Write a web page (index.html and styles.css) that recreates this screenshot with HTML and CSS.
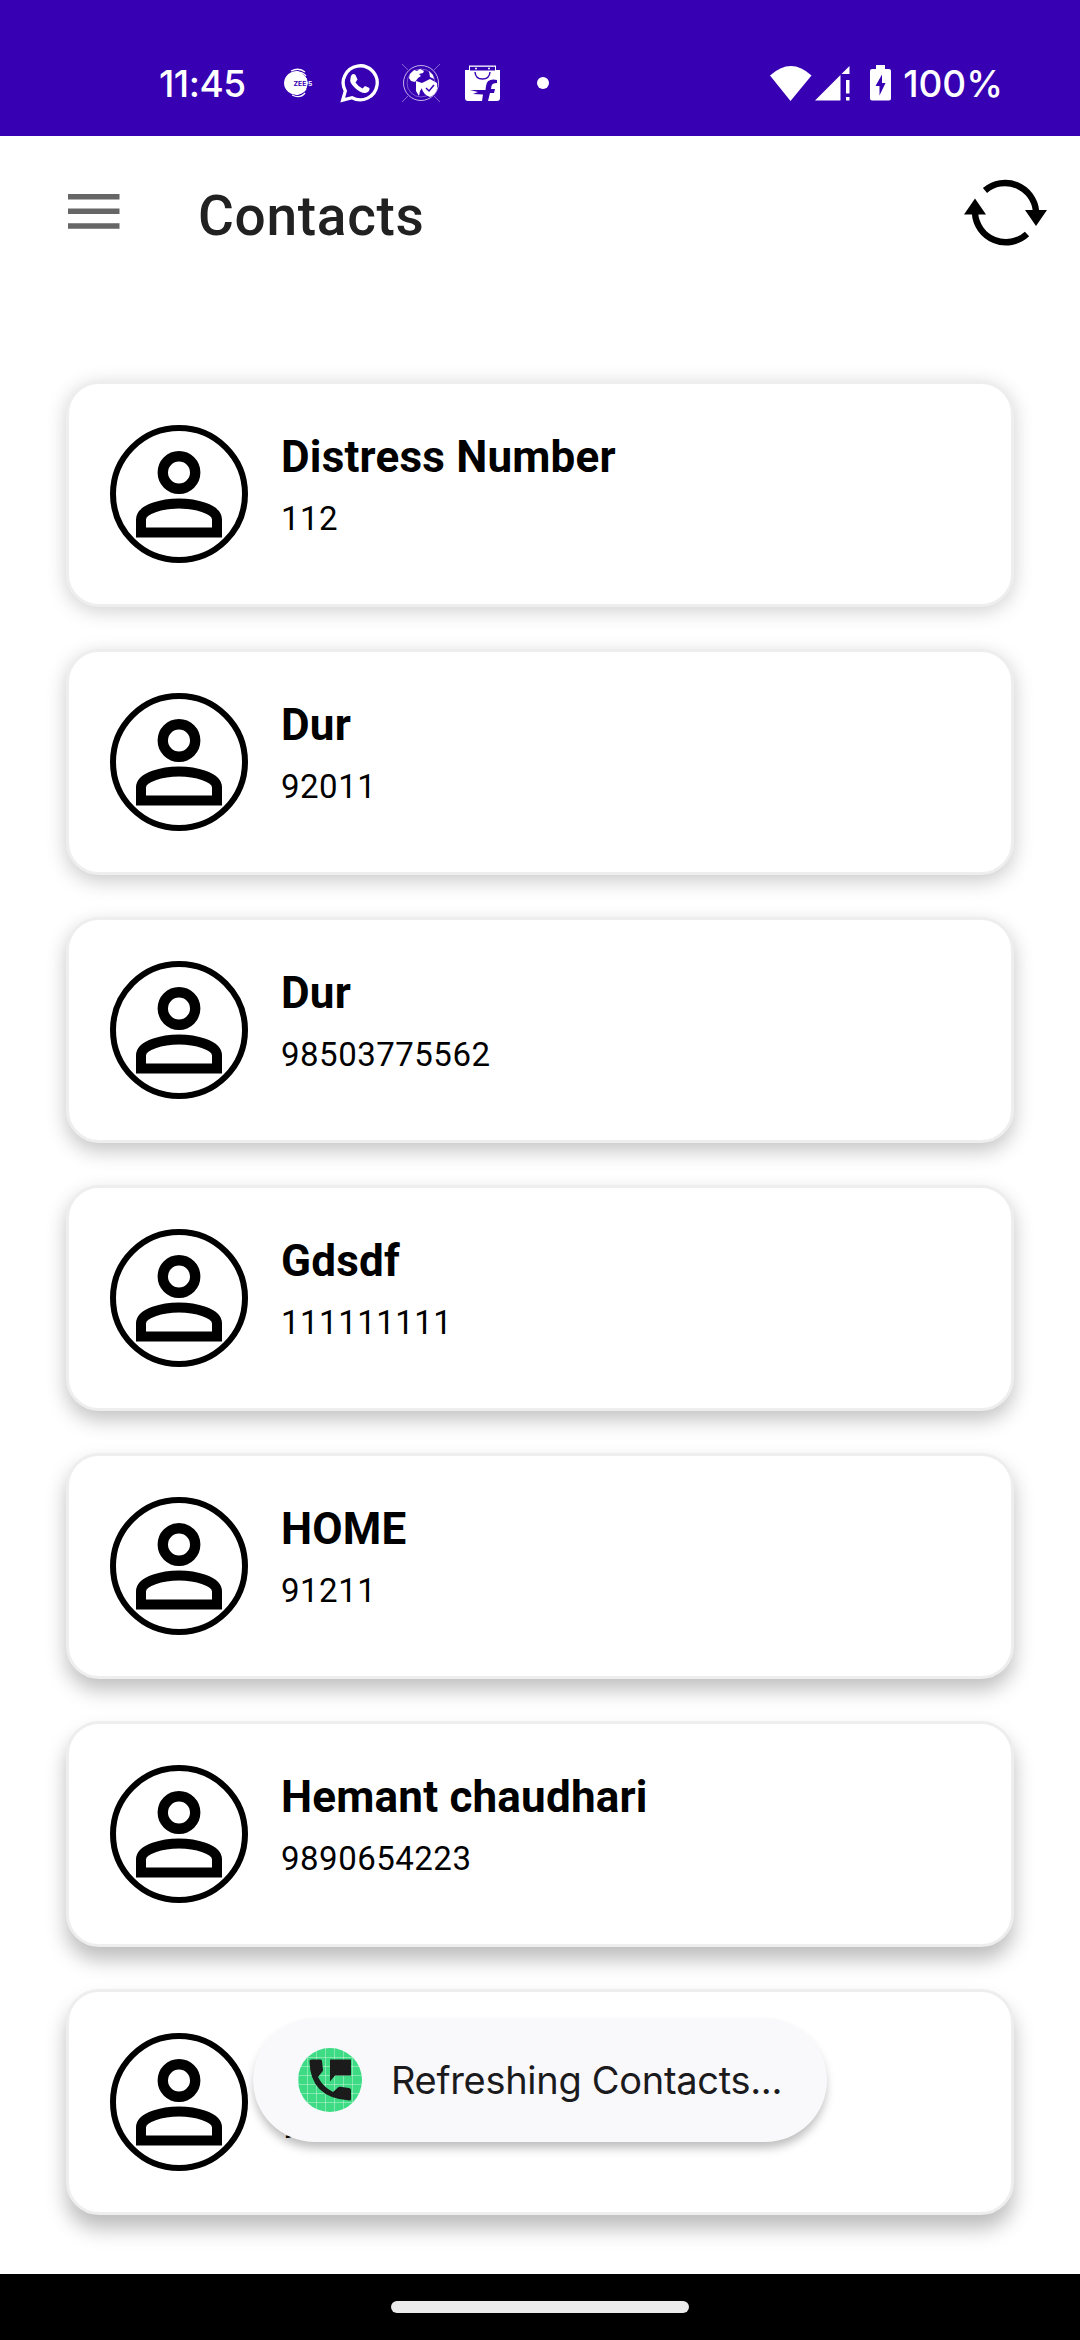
FILE: index.html
```html
<!DOCTYPE html>
<html lang="en">
<head>
<meta charset="utf-8">
<title>Contacts</title>
<link rel="stylesheet" href="styles.css">
</head>
<body>
<svg class="defs" aria-hidden="true">
  <symbol id="person" viewBox="0 0 86 87">
    <circle cx="43" cy="21.500" r="16.200" fill="none" stroke="#000" stroke-width="10.400"/>
    <path d="M5 81.500V68.500C5 58 27 52.500 43 52.500S81 58 81 68.500V81.500Z" fill="none" stroke="#000" stroke-width="10"/>
  </symbol>
</svg>
<div class="screen">
  <header class="status">
    <span class="clock">11:45</span>
    <div class="notes">
      <svg class="zee" width="30" height="30" viewBox="0 0 30 30"><path d="M14 3A12.500 12.500 0 0 0 0 15A12.500 12.500 0 0 0 14 27Q20 25 23 19.500H10V11.500H23Q20 5 14 3Z" fill="#fff"/><path d="M7 3Q15-1 21 4M12 5Q18 3 22 8M8 27Q16 31 21 25M13 25Q18 26 22 21" fill="none" stroke="#fff" stroke-width="1.300"/><path d="M9.500 10H22.500L24 15L22.500 20H9.500Z" fill="#fff"/><text x="9.500" y="17.600" font-size="6.800" font-weight="700" fill="#3700b3">ZEE</text><text x="24" y="17.600" font-size="6.800" font-weight="700" fill="#fff">5</text></svg>
      <svg class="wa" width="40" height="40" viewBox="0 0 40 40"><path d="M2.700 37.200L5.300 28A17 17 0 1 1 12 34.700Z" fill="none" stroke="#fff" stroke-width="3.300"/><path d="M12 11.500Q14 10.500 15.500 12L17.500 16.500L15.500 19.500Q18.500 24 22.500 25.500L25 23L29.500 25Q30 29 25.500 30Q21 30.500 15 25T10.500 15.500Q10.500 13 12 11.500Z" fill="#fff"/></svg>
      <svg class="globe" width="38" height="38" viewBox="0 0 38 38"><g fill="none" stroke="#fff"><circle cx="19" cy="19" r="17.500" stroke-width="1" opacity=".7"/><circle cx="19" cy="19" r="14" stroke-width=".7" opacity=".5"/><path d="M0 0L6 6M38 0L32 6M0 38L6 32M38 38L32 32" stroke-width="1" opacity=".4"/></g><path d="M8 10L12 6L15 7L18 5L22 7L21 9L17 10L19 12L16 14L13 18L9 17L7 14ZM27 7L31 11L32 15L28 13ZM14 17L20 19V24L18 27L17 32L14 27ZM28 15L35 19V25Q34 30 28 33Q21 30 20 25V19Z" fill="#fff"/><path d="M24 24L27 27L32 21" fill="none" stroke="#3700b3" stroke-width="1.500"/></svg>
      <svg class="flip" width="35" height="36" viewBox="0 0 35 36"><path d="M4 .5H31V5H35V33Q35 36 32 36H3Q0 36 0 33V5H4Z" fill="#fff"/><path d="M5 1.800H30V5.500H5Z" fill="#3700b3"/><circle cx="11" cy="3.500" r="1" fill="#fff"/><circle cx="24" cy="3.500" r="1" fill="#fff"/><path d="M10 7Q10.500 14 17.500 14T25 7" fill="none" stroke="#3700b3" stroke-width="1.400"/><path d="M32 15Q22 13 21 21L20.500 25H5L13 27L8 29L18 29.500L17 36H23L25 28H29L30 24H26L26.500 21Q27 18 32 18Z" fill="#3700b3"/></svg>
      <i class="dot"></i>
    </div>
    <div class="system">
      <svg class="wifi" width="42" height="35" viewBox="0 0 42 35"><path d="M0 9.500Q21-9.500 41.500 9.500L20.500 35Z" fill="#fff"/></svg>
      <svg class="signal" width="35" height="35" viewBox="0 0 35 35"><path d="M0 34.500L25.500 9V34.500ZM26.500 8L34.500 0V8ZM31 14H34.500V27.500H31ZM31 31H34.500V34.500H31Z" fill="#fff"/></svg>
      <svg class="battery" width="21" height="36" viewBox="0 0 21 36"><path d="M6 0H15V4H19Q21 4 21 6V33.500Q21 35.500 19 35.500H2Q0 35.500 0 33.500V6Q0 4 2 4H6Z" fill="#fff"/><path d="M12 9.500L5.500 21H9.500V30.500L15.500 18H12Z" fill="#3700b3"/></svg>
      <span class="percent">100%</span>
    </div>
  </header>
  <div class="appbar">
    <svg class="menu" width="52" height="36" viewBox="0 0 52 36"><path d="M0 0H51.500V5.500H0ZM0 14.500H51.500V20H0ZM0 29.200H51.500V34.700H0Z" fill="#666"/></svg>
    <h1>Contacts</h1>
    <svg class="sync" width="84" height="68" viewBox="0 0 84 68"><g fill="none" stroke="#000" stroke-width="6.400"><path d="M21 12.500A31 31 0 0 1 72 33"/><path d="M63 56A31 31 0 0 1 11 35"/></g><path d="M61 32H83L72 48ZM0 36.500H22L11 20.500Z"/></svg>
  </div>
  <main class="list">
    <article class="card"><div class="avatar"><svg><use href="#person"/></svg></div><div class="info"><h2>Distress Number</h2><p>112</p></div></article>
    <article class="card"><div class="avatar"><svg><use href="#person"/></svg></div><div class="info"><h2>Dur</h2><p>92011</p></div></article>
    <article class="card"><div class="avatar"><svg><use href="#person"/></svg></div><div class="info"><h2>Dur</h2><p>98503775562</p></div></article>
    <article class="card"><div class="avatar"><svg><use href="#person"/></svg></div><div class="info"><h2>Gdsdf</h2><p>111111111</p></div></article>
    <article class="card"><div class="avatar"><svg><use href="#person"/></svg></div><div class="info"><h2>HOME</h2><p>91211</p></div></article>
    <article class="card"><div class="avatar"><svg><use href="#person"/></svg></div><div class="info"><h2>Hemant chaudhari</h2><p>9890654223</p></div></article>
    <article class="card"><div class="avatar"><svg><use href="#person"/></svg></div><div class="info"><h2></h2><p>9</p></div></article>
  </main>
  <div class="toast">
    <svg class="app" width="64" height="64" viewBox="0 0 64 64"><defs><clipPath id="round"><circle cx="32" cy="32" r="32"/></clipPath></defs><g clip-path="url(#round)"><path d="M0 0H64V64H0Z" fill="#3ddc84"/><path d="M.5 0V64M9.500 0V64M18.500 0V64M27.500 0V64M36.500 0V64M45.500 0V64M54.500 0V64M0 9.500H64M0 18.500H64M0 27.500H64M0 36.500H64M0 45.500H64M0 54.500H64" stroke="#fff" stroke-opacity=".4" stroke-width=".9"/></g><path d="M32 11.500H53V27.500H37L32 33.500ZM13.500 11.500H22.500Q24 11.500 24 13L25 22Q25 23 24 24L20 29Q25 39 35 44L40 39.500Q41 38.500 42 38.700L51 40Q53 40.300 53 42V51Q53 52.500 51.500 52.500Q12 50 11.500 13Q11.500 11.500 13.500 11.500Z" fill="#1b1b1b"/></svg>
    <span>Refreshing Contacts...</span>
  </div>
  <footer class="nav"><i></i></footer>
</div>
</body>
</html>
```

FILE: styles.css
```css
* { box-sizing: border-box; }
body { margin: 0; font-family: Roboto, sans-serif; }
h1, h2, p { margin: 0; }
svg { display: block; flex: none; }
.defs { position: absolute; width: 0; height: 0; }
.screen { position: relative; display: flex; flex-direction: column; width: 1080px; height: 2340px; background: #fff; overflow: hidden; }
.status { flex: none; display: flex; align-items: center; height: 136px; padding: 30px 77px 0 159px; background: #3700b3; color: #fff; font-family: Inter, sans-serif; font-size: 37px; font-weight: 500; }
.clock { width: 125px; letter-spacing: -.5px; }
.notes { display: flex; align-items: center; }
.zee { margin-right: 26px; }
.wa { margin-right: 22px; }
.globe { margin-right: 25px; }
.flip { margin-right: 37px; }
.dot { width: 12px; height: 12px; border-radius: 50%; background: #fff; }
.system { display: flex; align-items: center; margin-left: auto; }
.wifi { margin-right: 3px; }
.signal { margin-right: 20px; }
.battery { margin-right: 12px; }
.percent { white-space: nowrap; }
.appbar { flex: none; display: flex; align-items: center; height: 154px; padding: 0 32px 2px 68px; }
.menu { margin-right: 78px; }
h1 { margin-top: 8px; font-size: 55px; font-weight: 500; line-height: 64px; letter-spacing: .7px; color: #212121; }
.sync { margin-left: auto; }
.list { flex: 1; display: flex; flex-direction: column; gap: 42px; padding: 91px 66px 0; }
.card { flex: none; display: flex; height: 226px; padding: 41px; background: #fff; border: 3px solid #eee; border-radius: 33px; }
.card:nth-child(1) { box-shadow: 0 4px 20px rgba(0,0,0,.19); }
.card:nth-child(2) { box-shadow: 0 6px 20px rgba(0,0,0,.21); }
.card:nth-child(3) { box-shadow: 0 8px 20px rgba(0,0,0,.23); }
.card:nth-child(4) { box-shadow: 0 9px 20px rgba(0,0,0,.24); }
.card:nth-child(5) { box-shadow: 0 11px 20px rgba(0,0,0,.25); }
.card:nth-child(6) { box-shadow: 0 13px 20px rgba(0,0,0,.26); }
.card:nth-child(7) { box-shadow: 0 14px 20px rgba(0,0,0,.26); }
.avatar { flex: none; width: 138px; height: 138px; padding: 20px 0 0 20px; border: 6px solid #000; border-radius: 50%; }
.avatar svg { width: 86px; height: 87px; }
.info { margin-left: 33px; padding-top: 6px; color: #000; }
h2 { height: 52px; font-size: 44px; font-weight: 700; line-height: 52px; letter-spacing: .2px; white-space: nowrap; }
p { margin-top: 16px; font-size: 33px; line-height: 40px; letter-spacing: .5px; }
.toast { position: absolute; left: 253px; top: 2018px; display: flex; align-items: center; width: 574px; height: 124px; padding: 0 0 1px 45px; border-radius: 62px; background: #f9f9fb; box-shadow: 0 7px 10px -1px rgba(0,0,0,.26); color: #1b1b1d; font-family: Inter, sans-serif; font-size: 38px; letter-spacing: -.3px; }
.toast span { margin-left: 29px; white-space: nowrap; }
.nav { flex: none; display: flex; justify-content: center; height: 66px; padding-top: 27px; background: #000; }
.nav i { width: 298px; height: 12px; border-radius: 6px; background: #ebebeb; }
```
